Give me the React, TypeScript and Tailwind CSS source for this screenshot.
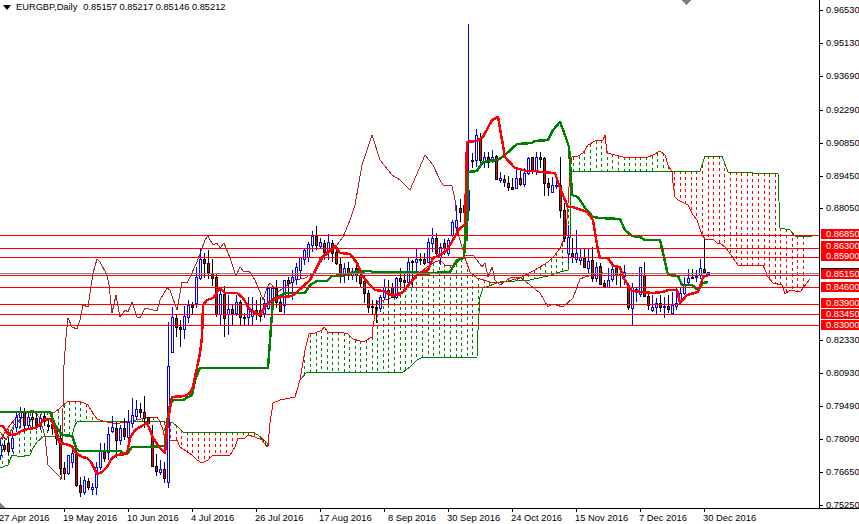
// EURGBP daily chart with ichimoku overlay
type Pt = [number, number];

// hi, bodyTop, bodyBottom, lo, up - one bar every 4px starting at x=0
const bars: number[][] = [
  [440, 445, 455, 460, 1], [440, 445, 449, 452, 0], [438, 443, 451, 455, 0], [430, 438, 448, 452, 1],
  [413, 417, 427, 432, 1], [407, 412, 417, 428, 1], [408, 412, 425, 432, 0], [413, 417, 425, 430, 1],
  [413, 417, 419, 428, 0], [412, 418, 425, 430, 0], [414, 418, 422, 430, 1], [413, 416, 421, 426, 0],
  [420, 425, 426, 431, 0], [418, 424, 428, 435, 0], [425, 428, 438, 445, 0], [425, 438, 468, 475, 0],
  [462, 468, 473, 480, 0], [455, 455, 473, 475, 1], [449, 453, 462, 468, 1], [450, 453, 485, 487, 0],
  [477, 485, 492, 497, 0], [476, 480, 492, 495, 1], [478, 481, 487, 490, 0], [483, 487, 489, 495, 1],
  [462, 467, 487, 495, 1], [443, 450, 467, 470, 1], [443, 452, 458, 462, 0], [427, 434, 452, 460, 1],
  [416, 427, 431, 433, 1], [422, 428, 440, 458, 0], [425, 428, 440, 445, 1], [418, 428, 436, 440, 0],
  [410, 422, 437, 440, 1], [398, 415, 423, 428, 1], [400, 409, 416, 420, 1], [403, 409, 412, 418, 0],
  [396, 412, 418, 428, 0], [417, 417, 423, 430, 0], [425, 436, 466, 467, 0], [454, 466, 471, 476, 0],
  [460, 469, 472, 475, 1], [462, 469, 478, 483, 0], [322, 366, 482, 488, 1], [307, 317, 352, 353, 1],
  [315, 318, 327, 337, 0], [320, 327, 329, 347, 0], [306, 316, 329, 339, 1], [300, 305, 317, 323, 1],
  [302, 305, 307, 314, 0], [267, 277, 303, 308, 1], [249, 259, 278, 280, 1], [253, 259, 263, 278, 0],
  [250, 263, 272, 279, 0], [259, 273, 278, 286, 0], [273, 277, 314, 317, 0], [287, 294, 314, 325, 1],
  [286, 294, 318, 337, 0], [295, 309, 314, 335, 1], [304, 309, 313, 325, 0], [295, 302, 313, 316, 1],
  [300, 302, 317, 325, 0], [313, 317, 318, 325, 0], [297, 308, 317, 325, 1], [297, 310, 316, 325, 1],
  [300, 310, 313, 320, 0], [297, 310, 316, 322, 0], [299, 303, 313, 318, 1], [288, 288, 308, 310, 1],
  [288, 288, 307, 312, 1], [280, 288, 302, 308, 0], [298, 302, 311, 311, 0], [280, 280, 305, 315, 1],
  [277, 280, 283, 297, 0], [270, 277, 282, 300, 1], [263, 267, 279, 285, 1], [257, 257, 270, 278, 1],
  [248, 250, 259, 265, 1], [242, 244, 257, 262, 1], [231, 236, 245, 252, 1], [226, 236, 245, 250, 0],
  [238, 242, 246, 248, 1], [240, 243, 252, 260, 0], [234, 242, 250, 260, 1], [240, 243, 253, 262, 0],
  [247, 252, 263, 265, 0], [258, 264, 275, 283, 0], [263, 268, 275, 283, 1], [262, 268, 275, 280, 0],
  [268, 272, 275, 280, 1], [262, 268, 275, 282, 0], [272, 275, 283, 287, 0], [275, 281, 293, 303, 0],
  [290, 293, 307, 313, 0], [300, 306, 307, 315, 0], [300, 307, 308, 323, 0], [295, 297, 308, 312, 1],
  [279, 287, 297, 300, 1], [280, 290, 293, 305, 0], [283, 287, 297, 298, 0], [277, 278, 297, 299, 1],
  [268, 278, 281, 290, 0], [272, 280, 282, 288, 0], [258, 262, 282, 284, 1], [260, 261, 262, 287, 0],
  [248, 259, 262, 275, 1], [253, 259, 260, 265, 0], [253, 259, 263, 265, 0], [238, 242, 262, 262, 1],
  [228, 238, 243, 252, 1], [233, 238, 253, 257, 0], [243, 247, 257, 265, 1], [239, 243, 248, 255, 0],
  [238, 240, 253, 256, 1], [220, 222, 235, 237, 1], [205, 220, 227, 235, 1], [199, 208, 212, 222, 0],
  [197, 205, 212, 222, 0], [24, 190, 210, 215, 1], [153, 160, 161, 168, 0], [129, 135, 160, 167, 1],
  [133, 138, 160, 163, 0], [152, 157, 162, 168, 1], [152, 157, 162, 168, 0], [150, 157, 160, 163, 1],
  [155, 156, 179, 180, 0], [172, 178, 180, 183, 1], [175, 179, 182, 187, 0], [176, 183, 187, 191, 0],
  [178, 187, 189, 190, 0], [168, 178, 188, 188, 1], [170, 178, 184, 186, 0], [168, 173, 184, 187, 1],
  [157, 158, 173, 175, 1], [157, 157, 171, 174, 0], [152, 157, 170, 175, 1], [152, 157, 159, 168, 0],
  [157, 158, 183, 196, 0], [178, 183, 187, 196, 0], [177, 185, 192, 193, 1], [177, 185, 186, 189, 1],
  [157, 185, 210, 218, 0], [203, 210, 238, 242, 0], [225, 237, 253, 263, 1], [238, 253, 257, 263, 0],
  [230, 253, 259, 263, 1], [248, 257, 260, 265, 1], [249, 258, 267, 268, 0], [248, 261, 268, 273, 1],
  [247, 260, 278, 282, 0], [262, 267, 278, 282, 1], [263, 266, 284, 285, 0], [280, 283, 286, 288, 0],
  [268, 280, 287, 288, 1], [262, 269, 279, 282, 1], [265, 268, 275, 285, 0], [266, 273, 275, 288, 0],
  [265, 272, 276, 285, 1], [283, 285, 307, 310, 0], [283, 287, 308, 325, 1], [288, 289, 292, 302, 1],
  [267, 267, 294, 297, 1], [262, 275, 296, 297, 0], [294, 296, 305, 310, 0], [295, 307, 310, 312, 1],
  [298, 303, 307, 315, 1], [295, 303, 307, 312, 0], [297, 306, 307, 318, 1], [295, 306, 309, 313, 0],
  [292, 305, 313, 313, 1], [287, 303, 306, 310, 1], [288, 293, 302, 305, 1], [277, 285, 293, 295, 1],
  [269, 278, 282, 285, 1], [269, 277, 278, 279, 0], [270, 276, 277, 282, 1], [259, 268, 275, 279, 1],
  [239, 269, 272, 273, 0], [272, 272, 274, 274, 1],
];

const tenkan: Pt[] = [[0,426],[3,426],[7,433],[11,435],[17,434],[21,431],[28,429],[35,428],[40,425],[43,420],[50,419],[53,423],[57,437],[60,443],[65,444],[72,446],[75,452],[82,457],[87,458],[91,462],[95,470],[97,474],[102,472],[107,467],[112,458],[117,455],[127,454],[130,438],[135,430],[140,427],[147,423],[150,430],[153,438],[160,448],[165,453],[168,420],[172,397],[185,396],[190,393],[193,387],[200,353],[202,337],[203,305],[207,300],[213,298],[220,288],[225,293],[237,293],[243,298],[250,310],[260,315],[266,305],[275,298],[292,296],[297,292],[310,280],[322,258],[335,246],[340,253],[350,254],[357,263],[363,277],[370,285],[375,290],[383,291],[393,296],[403,292],[410,283],[417,275],[423,272],[428,270],[433,258],[440,255],[447,250],[460,228],[465,225],[467,142],[477,141],[483,137],[492,120],[498,117],[502,140],[505,157],[515,168],[527,171],[535,171],[540,172],[555,173],[560,188],[568,207],[573,207],[587,212],[593,220],[598,250],[600,258],[608,258],[613,266],[620,267],[623,277],[628,285],[632,291],[652,293],[663,292],[668,290],[677,290],[680,303],[687,295],[698,292],[703,277],[708,275]];

const kijun: Pt[] = [[0,412],[50,412],[55,425],[62,435],[72,436],[77,450],[80,451],[120,451],[123,453],[128,453],[132,447],[145,447],[165,446],[167,422],[170,405],[173,400],[183,400],[192,395],[195,380],[200,368],[268,368],[271,327],[273,300],[285,293],[305,293],[310,285],[317,281],[327,281],[332,276],[348,275],[352,272],[370,271],[373,272],[417,272],[423,274],[433,273],[450,272],[457,260],[464,258],[466,220],[467,240],[468,172],[477,171],[482,163],[487,161],[498,160],[505,155],[517,144],[532,143],[535,141],[548,140],[553,130],[560,122],[565,135],[569,147],[572,195],[578,197],[585,208],[593,217],[600,218],[620,219],[625,230],[632,236],[640,237],[645,240],[660,240],[664,257],[668,275],[678,276],[682,285],[692,285],[698,290],[703,283],[708,282]];

const chikou: Pt[] = [[0,432],[6,440],[14,425],[22,418],[28,412],[33,410],[40,418],[45,437],[48,465],[53,470],[60,477],[61,480],[63,408],[64,365],[66,337],[68,318],[72,327],[77,329],[80,320],[83,305],[88,307],[93,273],[97,259],[100,262],[107,275],[109,285],[112,313],[116,295],[120,317],[125,310],[128,312],[132,302],[137,317],[140,318],[145,308],[157,311],[160,300],[167,288],[170,290],[177,310],[182,282],[187,283],[190,277],[197,262],[205,240],[208,236],[213,245],[217,243],[220,248],[224,243],[230,258],[236,276],[240,267],[244,272],[249,271],[255,280],[260,292],[263,300],[267,288],[270,283],[278,292],[283,288],[295,280],[305,278],[315,272],[320,258],[328,250],[337,245],[343,237],[350,220],[355,205],[362,165],[372,135],[380,160],[392,175],[400,180],[410,190],[425,155],[433,165],[440,180],[443,185],[452,186],[455,200],[458,233],[462,247],[465,255],[473,255],[477,260],[482,267],[485,263],[488,277],[492,267],[495,280],[500,285],[510,278],[520,277],[530,285],[540,293],[548,307],[552,304],[556,305],[563,307],[573,298],[580,279],[585,277],[603,272]];

const spanA: Pt[] = [[0,440],[8,428],[14,420],[20,413],[55,412],[60,408],[67,402],[78,401],[84,403],[88,405],[92,412],[97,419],[103,421],[112,423],[120,423],[127,422],[150,417],[157,417],[160,422],[163,430],[165,440],[177,440],[180,447],[192,455],[197,460],[202,463],[208,460],[213,455],[230,455],[235,447],[238,438],[245,438],[248,435],[255,437],[262,440],[267,447],[268,446],[270,423],[273,403],[280,400],[295,397],[300,380],[305,350],[309,334],[315,333],[322,330],[324,327],[328,332],[340,332],[348,334],[353,339],[360,341],[365,341],[372,337],[373,327],[375,315],[377,302],[388,299],[400,295],[410,283],[417,275],[423,270],[433,263],[440,260],[445,265],[455,265],[460,259],[465,258],[470,272],[477,278],[490,282],[500,283],[520,278],[535,270],[548,262],[555,255],[560,248],[566,235],[570,171],[572,157],[578,156],[583,153],[588,145],[595,141],[603,140],[605,135],[607,153],[615,155],[623,157],[630,157],[637,157],[648,157],[653,155],[660,151],[665,155],[668,165],[672,172],[673,183],[675,197],[678,200],[688,205],[693,215],[697,220],[702,235],[705,239],[713,239],[717,243],[720,243],[726,248],[733,258],[738,265],[763,265],[768,277],[773,283],[782,285],[785,294],[790,290],[800,292],[810,279]];

const spanB: Pt[] = [[0,468],[8,465],[12,455],[17,456],[25,456],[30,455],[33,448],[37,442],[43,437],[60,436],[72,435],[75,425],[78,421],[100,421],[165,422],[173,423],[178,427],[183,432],[253,432],[258,435],[267,443],[268,446],[270,423],[273,403],[280,400],[295,397],[300,380],[307,372],[392,372],[403,372],[410,367],[417,360],[423,357],[477,357],[478,330],[480,297],[483,288],[500,282],[530,280],[548,276],[560,272],[568,270],[570,240],[571,171],[670,171],[700,171],[705,156],[722,156],[728,172],[778,174],[780,228],[790,230],[795,236],[812,237]];

const levels = [235, 248, 257, 275, 287, 304, 314, 325];

// price labels: y is the centre of the text
const axisLabels: [string, number][] = [
  ['0.96530', 10], ['0.95130', 43], ['0.93690', 76], ['0.92290', 110], ['0.90850', 143], ['0.89450', 176],
  ['0.88050', 208], ['0.82330', 340], ['0.80930', 373], ['0.79490', 406], ['0.78090', 439],
  ['0.76650', 472], ['0.75250', 505],
];
const levelLabels: [string, number][] = [
  ['0.86850', 234], ['0.86300', 246], ['0.85900', 256], ['0.85150', 274], ['0.84600', 287], ['0.83900', 303],
  ['0.83450', 314], ['0.83000', 325],
];

const dates = [
  '27 Apr 2016', '19 May 2016', '10 Jun 2016', '4 Jul 2016', '26 Jul 2016', '17 Aug 2016', '8 Sep 2016',
  '30 Sep 2016', '24 Oct 2016', '15 Nov 2016', '7 Dec 2016', '30 Dec 2016',
];

const toPoints = (pts: Pt[]) => pts.map(([x, y]) => `${x},${y}`).join(' ');

const yAt = (pts: Pt[], x: number) => {
  for (let i = 1; i < pts.length; i++) {
    if (x <= pts[i][0]) {
      const [x0, y0] = pts[i - 1];
      const [x1, y1] = pts[i];
      return x1 === x0 ? y1 : y0 + ((y1 - y0) * (x - x0)) / (x1 - x0);
    }
  }
  return pts[pts.length - 1][1];
};

function Chart() {
  const hatch = [];
  for (let x = 2; x <= 808; x += 5.6) {
    const a = yAt(spanA, x);
    const b = yAt(spanB, x);
    if (Math.abs(a - b) < 2) continue;
    hatch.push(
      <line
        key={x}
        x1={Math.round(x) + 0.5}
        x2={Math.round(x) + 0.5}
        y1={Math.min(a, b)}
        y2={Math.max(a, b)}
        stroke={a < b ? '#008000' : '#ff0000'}
        strokeWidth={1.5}
        strokeDasharray="3 3"
      />,
    );
  }

  return (
    <svg width={819} height={508} className="block" shapeRendering="crispEdges">
      {hatch}
      <polyline points={toPoints(spanB)} fill="none" stroke="#008000" />
      <polyline points={toPoints(spanA)} fill="none" stroke="#ff0000" />
      <polyline points={toPoints(chikou)} fill="none" stroke="#a52a2a" />
      {bars.map(([hi, top, bot, lo, up], i) => {
        const x = i * 4 + 0.5;
        const color = up ? '#0000ff' : '#000000';
        return (
          <g key={i}>
            <line x1={x} x2={x} y1={hi} y2={lo} stroke={color} />
            <rect x={x - 1} y={top} width={2} height={Math.max(bot - top, 1)} fill={up ? '#ffffff' : '#ff0000'} stroke={color} />
          </g>
        );
      })}
      <polyline points={toPoints(kijun)} fill="none" stroke="#008000" strokeWidth={2.5} strokeLinejoin="round" />
      <polyline points={toPoints(tenkan)} fill="none" stroke="#ff0000" strokeWidth={2.5} strokeLinejoin="round" />
      <line x1={0} x2={819} y1={273.5} y2={273.5} stroke="#808080" />
      {levels.map((y) => (
        <line key={y} x1={0} x2={819} y1={y + 0.5} y2={y + 0.5} stroke="#ff0000" />
      ))}
      {/* shift markers */}
      <polygon points="682,0 691,0 686.5,5" fill="#708090" />
      <polygon points="0,503 5,508 0,508" fill="#708090" />
    </svg>
  );
}

function PriceAxis() {
  return (
    <div className="relative flex-1">
      {axisLabels.map(([label, y]) => (
        <div key={label} className="absolute left-0 flex items-center h-[10px]" style={{ top: y - 5 }}>
          <div className="w-[3px] h-px bg-black" />
          <span className="ml-[3px] mt-[2px] text-[9.3px] leading-none text-black">{label}</span>
        </div>
      ))}
      {levelLabels.map(([label, y]) => (
        <div
          key={label}
          className="absolute left-[1px] right-0 h-[10px] bg-[#ff0000] pl-[5px] text-[9.3px] leading-[10px] text-white"
          style={{ top: y - 5 }}
        >
          {label}
        </div>
      ))}
      <div className="absolute left-[1px] right-0 top-[268px] h-px bg-black" />
    </div>
  );
}

export default function App() {
  return (
    <div className="relative w-[859px] h-[524px] overflow-hidden bg-white font-['Liberation_Sans',sans-serif]">
      <div className="flex h-[509px] border-b border-black">
        <div className="w-[820px] border-r border-black">
          <Chart />
        </div>
        <PriceAxis />
      </div>

      <div className="flex">
        {dates.map((d, i) => (
          <div key={d} className="w-[64px] shrink-0">
            <div className={i === 0 ? 'h-[3px]' : 'w-px h-[3px] bg-black'} />
            <div className={`whitespace-nowrap text-[9.4px] leading-[11px] text-black ${d === '8 Sep 2016' ? 'pl-[4px]' : '-ml-px'}`}>
              {d}
            </div>
          </div>
        ))}
      </div>

      {/* symbol header over the plot */}
      <div className="absolute left-[3px] top-[2px] flex items-center text-[9.3px] leading-[11px] text-black">
        <svg width={8} height={5} className="mr-[5px]">
          <polygon points="0,0 8,0 4,5" fill="#000000" />
        </svg>
        <span className="mr-[6px]">EURGBP,Daily</span>
        <span>0.85157 0.85217 0.85146 0.85212</span>
      </div>
    </div>
  );
}
